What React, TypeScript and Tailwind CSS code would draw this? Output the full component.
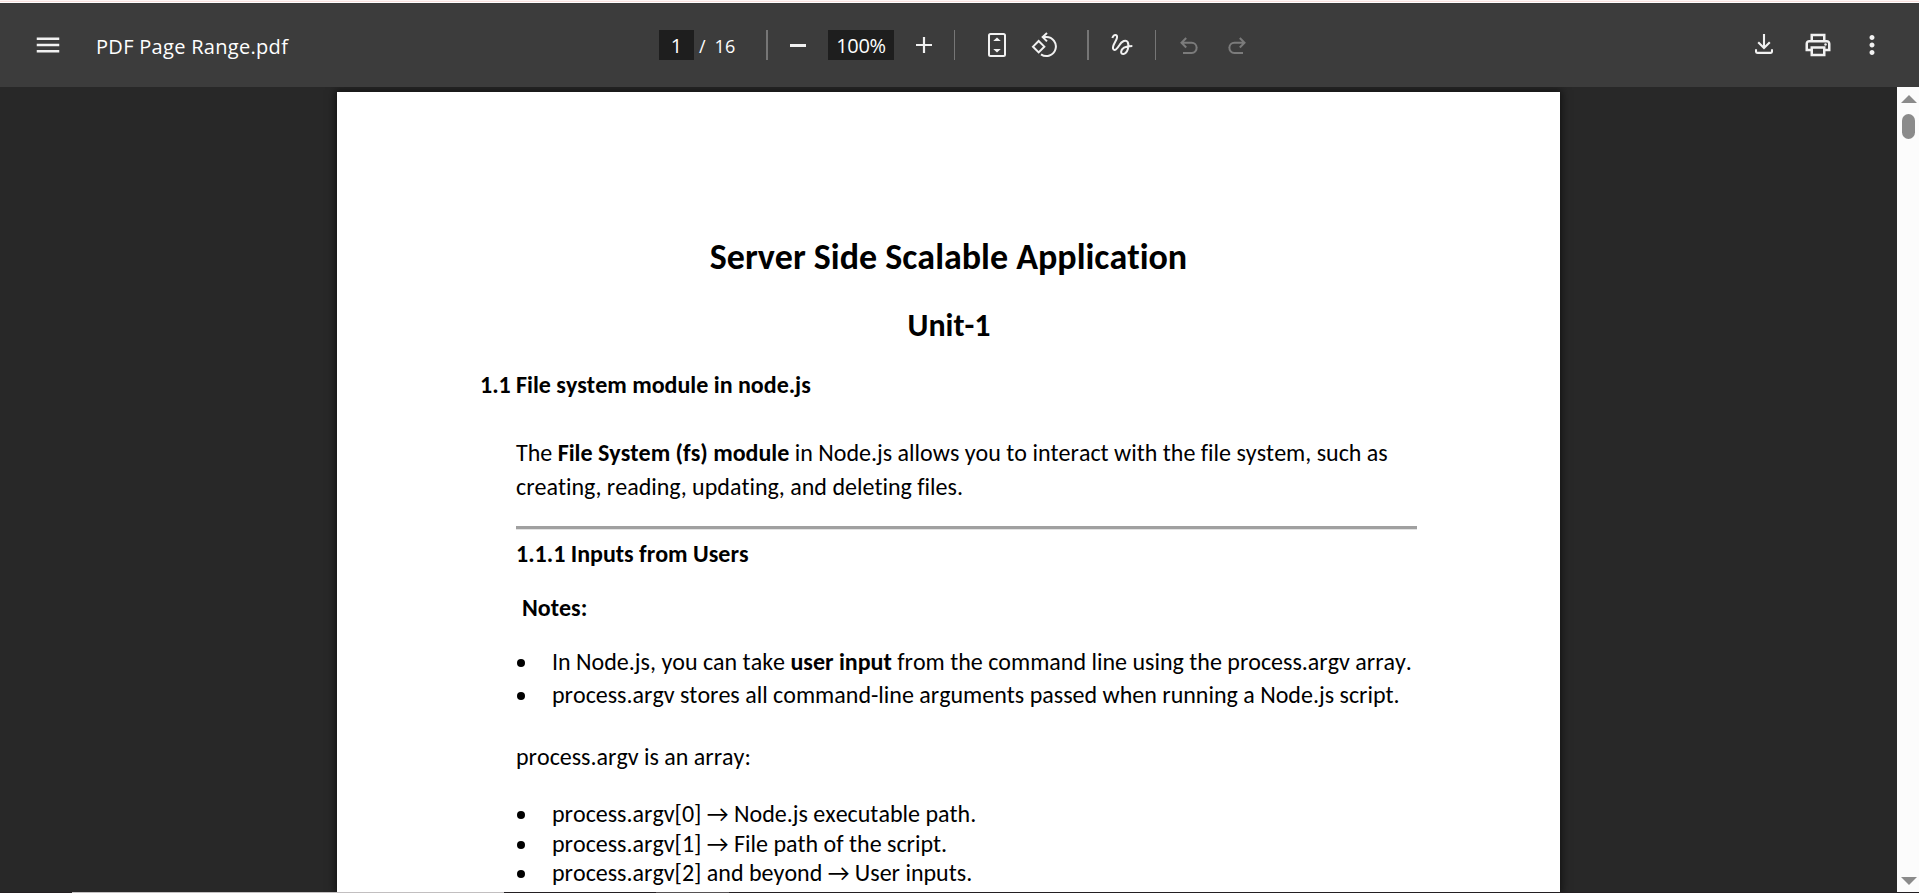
import type { ReactNode } from "react";
import { MdMenu, MdMoreVert, MdOutlinePrint } from "react-icons/md";

function FitPageIcon() {
  return (
    <svg width="18" height="24" viewBox="0 0 18 24" fill="none">
      <rect x="1" y="1" width="16" height="22" rx="1.5" stroke="#f1f1f1" strokeWidth="2" />
      <path d="M5.2 8 9 4.6 12.8 8zM5.2 16 9 19.4 12.8 16z" fill="#f1f1f1" />
    </svg>
  );
}

function RotateIcon() {
  return (
    <svg className="ml-[25px]" width="26" height="26" viewBox="0 0 78 78" fill="none" stroke="#f1f1f1" strokeWidth="6">
      <path d="M23 27 40 44 23 61 6 44z" />
      <path d="M48 3 35 15 48 28M36 15H46A28.5 28.5 0 1 1 30 67" />
    </svg>
  );
}

function DrawIcon() {
  return (
    <svg width="22" height="24" viewBox="0 0 66 72" fill="none" stroke="#f1f1f1" strokeWidth="6">
      <path d="M4 15C8 3 20 3 18 14 17 23 4 36 6 46 10 57 19 47 25 37 32 24 45 19 50 27 56 39 49 62 37 63 27 63 29 50 39 44 46 40 54 39 64 39" />
    </svg>
  );
}

function UndoIcon({ className = "" }: { className?: string }) {
  return (
    <svg className={className} width="18" height="18" viewBox="0 0 18 18" fill="none" stroke="#7b7b7b" strokeWidth="2">
      <path d="M6.2 1 1.5 5.8 6.2 10.5M1.8 5.8H11.7A4.9 4.9 0 0 1 16.6 10.7A4.9 4.9 0 0 1 11.7 16H3" />
    </svg>
  );
}

function DownloadIcon() {
  return (
    <svg className="mb-0.5" width="18" height="20" viewBox="0 0 18 20" fill="none" stroke="#f1f1f1" strokeWidth="2.1">
      <path d="M9 0V14M3.2 8.2 9 14 14.8 8.2" />
      <path d="M1 15.3V17.4Q1 18.9 2.5 18.9H15.5Q17 18.9 17 17.4V15.3" />
    </svg>
  );
}

function Toolbar() {
  return (
    <header className="flex h-[84px] w-full shrink-0 items-start bg-[#3c3c3c] font-['Open_Sans','Noto_Sans',sans-serif] text-white">
      <div className="flex h-[84px] w-[659px] items-center">
        <MdMenu className="ml-[33px] size-[30px] text-[#f1f1f1]" />
        <span className="mt-[3px] ml-[33px] text-xl tracking-[0.3px] font-medium whitespace-nowrap">PDF Page Range.pdf</span>
      </div>
      <div className="mt-[27px] flex h-[30px] w-[620px] items-center text-xl leading-8">
        <div className="h-[30px] w-[35px] bg-[#1e1e1e] text-center">1</div>
        <div className="ml-[5px] flex w-[67px] gap-[9px] pt-0.5 text-lg leading-8">
          <span>/</span>
          <span>16</span>
        </div>
        <div className="h-[30px] w-0.5 bg-[#767676]" />
        <div className="ml-[22px] h-[3px] w-4 bg-[#f1f1f1]" />
        <div className="ml-[22px] h-[30px] w-[66px] bg-[#1e1e1e] text-center tracking-[-0.3px]">100%</div>
        <svg className="ml-[22px]" width="16" height="16" viewBox="0 0 16 16" stroke="#f1f1f1" strokeWidth="2.2">
          <path d="M8 0V16M0 8H16" />
        </svg>
        <div className="ml-[22px] h-[30px] w-px bg-[#767676]" />
        <div className="ml-[33px]"><FitPageIcon /></div>
        <RotateIcon />
        <div className="ml-[30px] h-[30px] w-0.5 bg-[#767676]" />
        <div className="ml-[22px]"><DrawIcon /></div>
        <div className="ml-[22px] h-[30px] w-px bg-[#767676]" />
        <UndoIcon className="mt-0.5 ml-6" />
        <UndoIcon className="mt-0.5 ml-[30px] -scale-x-100" />
      </div>
      <div className="ml-auto flex h-[84px] items-center text-[#f1f1f1]">
        <DownloadIcon />
        <MdOutlinePrint className="ml-[30px] size-[30px]" />
        <MdMoreVert className="mr-8 ml-6 size-[30px]" />
      </div>
    </header>
  );
}

function Item({ className = "", children }: { className?: string; children: ReactNode }) {
  return (
    <li className={`flex items-center ${className}`}>
      <span className="mt-0.5 mr-[27px] ml-px size-2 rounded-full bg-black" />
      <span>{children}</span>
    </li>
  );
}

function DocumentPage() {
  return (
    <article className="mt-[5px] ml-[337px] h-[800px] w-[1223px] overflow-hidden bg-white pt-[143px] pl-[179px] font-[Carlito,Calibri,Lato,sans-serif] text-2xl leading-7 [font-kerning:none] [font-variant-ligatures:none] whitespace-nowrap text-black shadow-[0_0_8px_2px_rgba(0,0,0,0.55)]">
      <h1 className="mr-[179px] text-center text-4xl leading-[44px] font-bold">Server Side Scalable Application</h1>
      <h2 className="mt-[27px] mr-[178px] text-center text-[32px] leading-10 font-bold">Unit-1</h2>
      <h3 className="mt-[25px] -ml-9 flex font-bold">
        <span className="w-9">1.1</span>
        <span>File system module in node.js</span>
      </h3>
      <p className="mt-10">The <b>File System (fs) module</b> in Node.js allows you to interact with the file system, such as</p>
      <p className="mt-1.5">creating, reading, updating, and deleting files.</p>
      <hr className="mt-[25px] h-[3px] w-[901px] border-0 bg-[#a0a0a0] shadow-[0_1px_0_#e3e3e3]" />
      <h4 className="mt-[11px] font-bold">1.1.1 Inputs from Users</h4>
      <h4 className="mt-[26px] ml-1.5 font-bold">Notes:</h4>
      <ul className="mt-[26px]">
        <Item>In Node.js, you can take <b>user input</b> from the command line using the process.argv array.</Item>
        <Item className="mt-[5px]">process.argv stores all command-line arguments passed when running a Node.js script.</Item>
      </ul>
      <p className="mt-[34px]">process.argv is an array:</p>
      <ul className="mt-[29px]">
        <Item>process.argv[0] → Node.js executable path.</Item>
        <Item className="mt-0.5">process.argv[1] → File path of the script.</Item>
        <Item className="mt-px">process.argv[2] and beyond → User inputs.</Item>
      </ul>
    </article>
  );
}

function Scrollbar() {
  return (
    <div className="flex w-[22px] flex-col items-center bg-[#fcfcfc] pl-px">
      <svg className="mt-2" width="16" height="8" viewBox="0 0 16 8" fill="#8b8b8b"><path d="M8 0 16 8H0z" /></svg>
      <div className="mt-[11px] h-[25px] w-[13px] rounded-full bg-[#8b8b8b]" />
      <svg className="mt-auto mb-[7px]" width="16" height="8" viewBox="0 0 16 8" fill="#8b8b8b"><path d="M0 0H16L8 8z" /></svg>
    </div>
  );
}

export default function App() {
  return (
    <div className="flex h-[893px] w-[1919px] flex-col overflow-hidden bg-[#282828]">
      <div className="h-[3px] shrink-0 border-b border-white bg-[#f8dfdc]"><div className="h-px bg-[#fdf6f5]" /></div>
      <Toolbar />
      <main className="flex h-[805px] shrink-0 overflow-hidden">
        <div className="w-[1897px] overflow-hidden"><DocumentPage /></div>
        <Scrollbar />
      </main>
      <div className="flex h-px shrink-0 bg-[#231f22]">
        <div className="ml-[72px] w-[432px] bg-[#c2bfc0]" />
        <div className="ml-[152px] w-[73px] bg-[#565254]" />
      </div>
    </div>
  );
}
